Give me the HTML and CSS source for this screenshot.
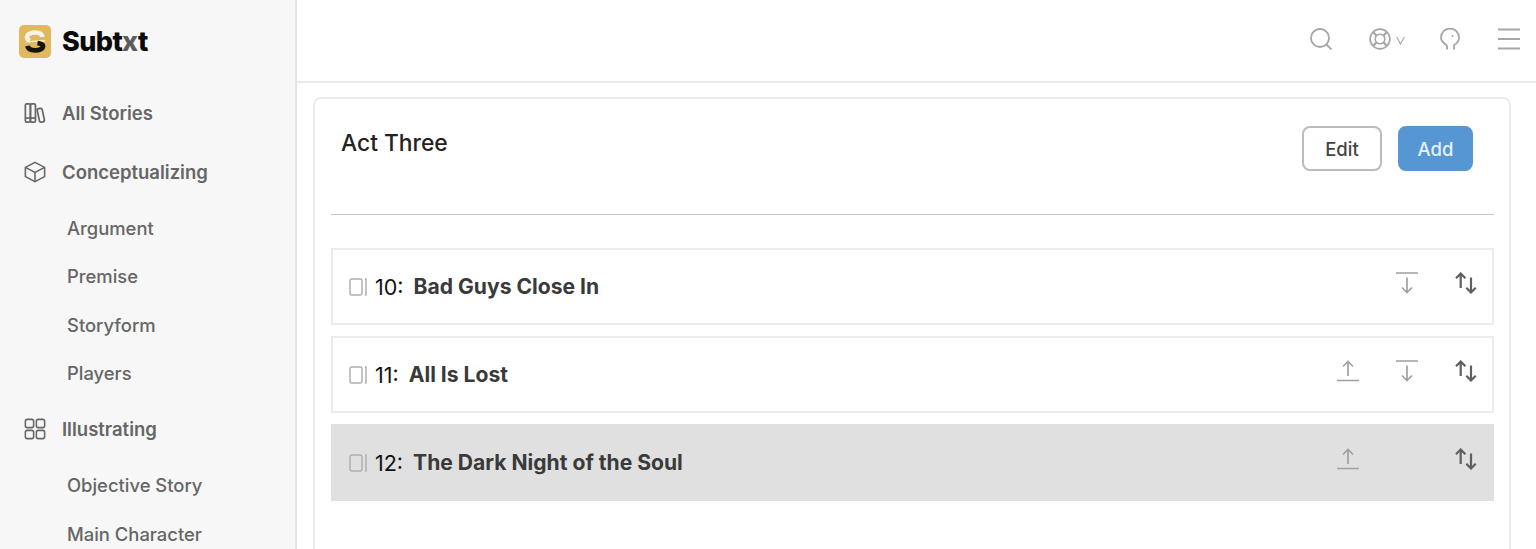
FILE: index.html
```html
<!DOCTYPE html>
<html>
<head>
  <title>Subtxt</title>
  <link rel="stylesheet" href="styles.css">
</head>
<body>
<div class="app">
  <aside class="sidebar">
    <div class="brand">
      <svg class="logo" width="32" height="33" viewBox="0 0 32 33">
        <rect width="32" height="33" rx="5" fill="#e0b85e"/>
        <path d="M23.500 12C23 8.800 20 7.500 16 7.500C11 7.500 8 9.500 8 12.500C8 14 9 15 11 15.600" fill="none" stroke="#f8f3e6" stroke-width="4.600"/>
        <path d="M5 17.500C12 15.500 20 15 27 15.500L25 16.800C19 16.500 12 16.800 5 17.500Z" fill="#f8f3e6"/>
        <path d="M8.500 20.800C9 24 12.500 25.300 16 25.300C21 25.300 24 23.500 24 21C24 19.200 22 18.600 18.500 18.200" fill="none" stroke="#17130b" stroke-width="4.800"/>
      </svg>
      <span class="brand-name">Subt<span class="brand-x">x</span>t</span>
    </div>
    <nav class="nav">
      <a class="nav-item">
        <svg class="nav-icon books" viewBox="0 0 24 24"><rect x="1.500" y="2" width="5.500" height="20" rx="1.500"/><rect x="7" y="2" width="5.500" height="20" rx="1.500"/><path d="M1.500 17.500h11"/><rect x="15.500" y="7" width="5.500" height="15" rx="1.800" transform="rotate(-12 18 14)"/></svg>
        All Stories
      </a>
      <a class="nav-item">
        <svg class="nav-icon" viewBox="0 0 24 24"><path d="M12 1.500l10.500 5.500v10L12 22.500 1.500 17V7z"/><path d="M1.500 7l10.500 5.500L22.500 7"/><path d="M12 12.500v10"/></svg>
        Conceptualizing
      </a>
      <a class="nav-sub">Argument</a>
      <a class="nav-sub">Premise</a>
      <a class="nav-sub">Storyform</a>
      <a class="nav-sub">Players</a>
      <a class="nav-item">
        <svg class="nav-icon" viewBox="0 0 24 24"><rect x="1.500" y="1.500" width="9" height="9" rx="2"/><rect x="13.500" y="1.500" width="9" height="9" rx="2"/><rect x="1.500" y="13.500" width="9" height="9" rx="2"/><rect x="13.500" y="13.500" width="9" height="9" rx="2"/></svg>
        Illustrating
      </a>
      <a class="nav-sub">Objective Story</a>
      <a class="nav-sub">Main Character</a>
    </nav>
  </aside>

  <div class="main">
    <header class="topbar">
      <svg class="top-icon" viewBox="0 0 22 22"><circle cx="10" cy="10" r="9"/><path d="M16.500 16.500l5 5"/></svg>
      <div class="help">
        <svg class="top-icon" viewBox="0 0 24 24"><circle cx="12" cy="12" r="10.800"/><circle cx="12" cy="12" r="5.200"/><path d="M4.400 4.400l4 4M19.600 4.400l-4 4M4.400 19.600l4-4M19.600 19.600l-4-4" stroke-width="2.400"/></svg>
        <svg class="chevron" viewBox="0 0 10 10"><path d="M.8 1l4.200 8 4.200-8"/></svg>
      </div>
      <svg class="top-icon" viewBox="0 0 22 22"><path d="M8 21.500v-3.500c0-1.500-6-3-6-8.500a9 9 0 0 1 18 0c0 3.500-2 6-5 7.500v4.500"/><circle class="eye" cx="13.500" cy="8" r="1"/></svg>
      <svg class="top-icon" viewBox="0 0 22 22"><path d="M0 1.500h22M0 11h22M0 20.500h22"/></svg>
    </header>

    <section class="card">
      <div class="card-head">
        <h2 class="card-title">Act Three</h2>
        <div class="actions">
          <button class="btn">Edit</button>
          <button class="btn btn-primary">Add</button>
        </div>
      </div>
      <hr class="divider">
      <div class="beats">
        <div class="beat">
          <svg class="book" viewBox="0 0 18 18"><rect x="1" y="1" width="12" height="16" rx="2"/><path d="M16 1h1v16h-1"/></svg>
          <span class="num">10:</span><span class="name">Bad Guys Close In</span>
          <div class="moves">
            <svg class="move" viewBox="0 0 22 22"><path d="M0 1h22M11 5.500v15M6 15.500l5 5 5-5"/></svg>
            <svg class="move swap" viewBox="0 0 22 22"><path d="M5.700 16V1.500M1 6.200l4.700-4.700 4.700 4.700M16 5.500v15M11.300 15.800l4.700 4.700 4.700-4.700"/></svg>
          </div>
        </div>
        <div class="beat">
          <svg class="book" viewBox="0 0 18 18"><rect x="1" y="1" width="12" height="16" rx="2"/><path d="M16 1h1v16h-1"/></svg>
          <span class="num">11:</span><span class="name">All Is Lost</span>
          <div class="moves">
            <svg class="move" viewBox="0 0 22 22"><path d="M0 20.500h22M11 16V1.500M6 6.500l5-5 5 5"/></svg>
            <svg class="move" viewBox="0 0 22 22"><path d="M0 1h22M11 5.500v15M6 15.500l5 5 5-5"/></svg>
            <svg class="move swap" viewBox="0 0 22 22"><path d="M5.700 16V1.500M1 6.200l4.700-4.700 4.700 4.700M16 5.500v15M11.300 15.800l4.700 4.700 4.700-4.700"/></svg>
          </div>
        </div>
        <div class="beat beat-current">
          <svg class="book" viewBox="0 0 18 18"><rect x="1" y="1" width="12" height="16" rx="2"/><path d="M16 1h1v16h-1"/></svg>
          <span class="num">12:</span><span class="name">The Dark Night of the Soul</span>
          <div class="moves">
            <svg class="move" viewBox="0 0 22 22"><path d="M0 20.500h22M11 16V1.500M6 6.500l5-5 5 5"/></svg>
            <span class="slot"></span>
            <svg class="move swap" viewBox="0 0 22 22"><path d="M5.700 16V1.500M1 6.200l4.700-4.700 4.700 4.700M16 5.500v15M11.300 15.800l4.700 4.700 4.700-4.700"/></svg>
          </div>
        </div>
      </div>
    </section>
  </div>
</div>
</body>
</html>
```

FILE: styles.css
```css
html, body {
  margin: 0;
  padding: 0;
  height: 549px;
  overflow: hidden;
  background: #fff;
  font-family: Inter, "Liberation Sans", sans-serif;
  color: #333;
}

.app { display: flex; height: 549px; overflow: hidden; }

/* sidebar */
.sidebar {
  width: 276px;
  flex: none;
  background: #f7f7f7;
  border-right: 2px solid #e6e6e6;
  padding: 25px 0 0 19px;
}

.brand { display: flex; align-items: center; gap: 11px; height: 33px; }
.brand-name { font-size: 27px; font-weight: 800; color: #0a0a0a; letter-spacing: -0.6px; }
.brand-x { color: #5c5c5c; }

.nav { display: flex; flex-direction: column; margin-top: 25.500px; }
.nav-item {
  display: flex;
  align-items: center;
  gap: 16px;
  height: 59px;
  padding-left: 5px;
  font-size: 18.500px;
  font-weight: 600;
  color: #666;
}
.nav-icon {
  width: 22px;
  height: 22px;
  fill: none;
  stroke: #666;
  stroke-width: 1.700;
}
.books { stroke-width: 1.900; }
.nav-sub {
  display: flex;
  align-items: center;
  height: 48.300px;
  padding-left: 48px;
  font-size: 18.400px;
  font-weight: 500;
  color: #666;
}
.nav-sub + .nav-item { margin-top: 2.500px; }
.nav-item + .nav-sub { margin-top: 2.500px; }

/* top bar */
.main { flex: 1; min-width: 0; }
.topbar {
  display: flex;
  justify-content: flex-end;
  align-items: center;
  gap: 37px;
  height: 78px;
  padding: 0 16px 3px 0;
  border-bottom: 2px solid #e9e9e9;
}
.top-icon {
  width: 22px;
  height: 22px;
  fill: none;
  stroke: #a6a6a6;
  stroke-width: 1.800;
}
.top-icon .eye { fill: #a6a6a6; stroke: none; }
.help { display: flex; align-items: center; gap: 5px; margin-right: -3px; }
.chevron {
  width: 9px;
  height: 9px;
  margin-top: 3px;
  fill: none;
  stroke: #a6a6a6;
  stroke-width: 1.200;
}

/* card */
.card {
  margin: 14px 25px 0 16px;
  height: 500px;
  padding: 0 15px 0 16px;
  border: 2px solid #ececec;
  border-radius: 8px;
}
.card-head {
  display: flex;
  justify-content: space-between;
  align-items: flex-start;
  padding: 29px 21px 0 10px;
  height: 86px;
}
.card-title { margin: 0; font-size: 22.800px; font-weight: 500; color: #222; line-height: 30px; }
.actions { display: flex; gap: 16px; margin-top: -2px; }
.btn {
  height: 45px;
  width: 80px;
  padding: 0;
  border: 2px solid #bcbcbc;
  border-radius: 8px;
  background: #fff;
  color: #444;
  font: 500 18.500px Inter, "Liberation Sans", sans-serif;
}
.btn-primary { width: 75px; background: #5596d3; border-color: #5596d3; color: #e8f1fa; }

.divider { margin: 0; border: 0; border-top: 1px solid #c8c8c8; }

.beats { display: flex; flex-direction: column; gap: 11px; margin-top: 33px; }
.beat {
  display: flex;
  align-items: center;
  height: 77px;
  box-sizing: border-box;
  padding: 0 15px 0 16px;
  border: 2px solid #ececec;
}
.beat-current { background: #e0e0e0; border-color: #e0e0e0; }
.book {
  width: 18px;
  height: 18px;
  margin-right: 8px;
  fill: none;
  stroke: #b0b0b0;
  stroke-width: 1.500;
}
.num { font-size: 21.500px; color: #111; margin-right: 10px; }
.name { font-size: 21.100px; font-weight: 700; color: #3a3a3a; }
.moves { margin-left: auto; display: flex; gap: 37px; margin-top: -7px; }
.slot { width: 22px; }
.move {
  width: 22px;
  height: 22px;
  fill: none;
  stroke: #a0a0a0;
  stroke-width: 1.700;
}
.swap { stroke: #5f5f5f; stroke-width: 2.200; }
```
